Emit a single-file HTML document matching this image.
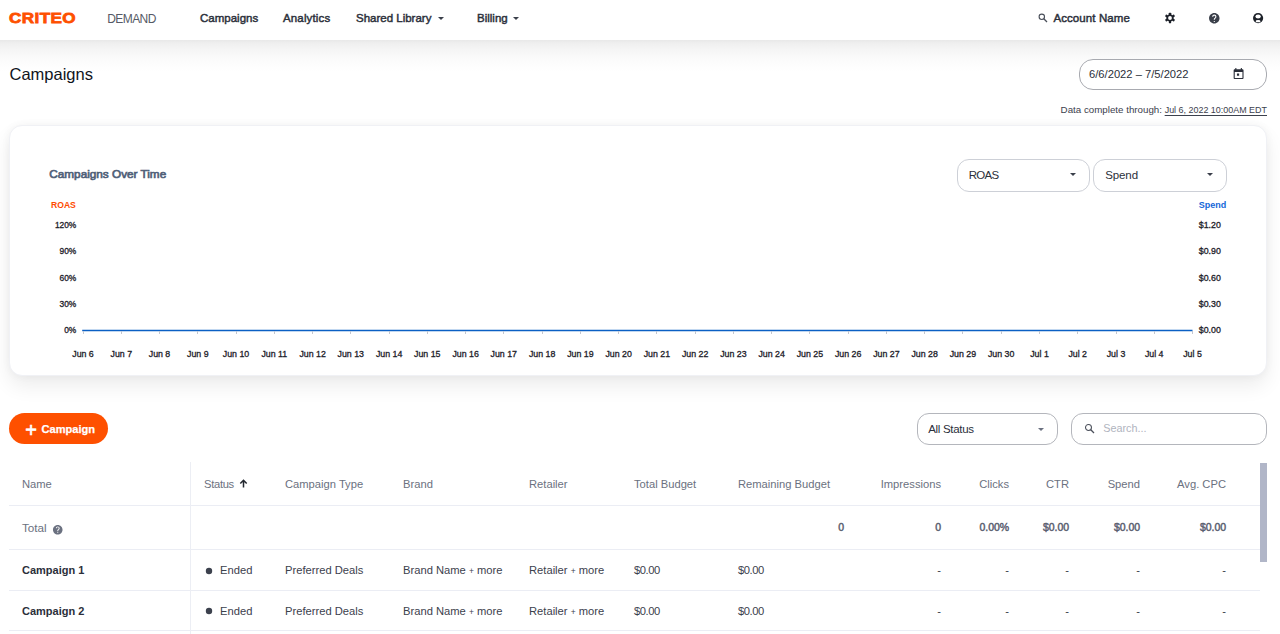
<!DOCTYPE html>
<html lang="en">
<head>
<meta charset="utf-8">
<title>Campaigns</title>
<style>
*{box-sizing:border-box;margin:0;padding:0}
html,body{width:1280px;height:634px;overflow:hidden;background:#fff;font-family:"Liberation Sans",sans-serif;color:#23272f}
.abs{position:absolute;white-space:nowrap}
#nav{position:absolute;left:0;top:0;width:1280px;height:40px;background:#fff;z-index:5}
#navshadow{position:absolute;left:0;top:40px;width:1280px;height:32px;background:linear-gradient(#e8e8e8,#efefef 10%,#f5f5f5 30%,#fafafa 55%,#fdfdfd 78%,#fff);z-index:1}
.logo{left:9.300px;top:8.200px;font-size:15.500px;font-weight:bold;color:#fe5000;letter-spacing:0.350px;line-height:20px;-webkit-text-stroke:0.8px #fe5000;transform:scaleX(1.105);transform-origin:0 50%}
.demand{left:107.300px;top:11.600px;font-size:12px;color:#555a66;line-height:14px;letter-spacing:-0.6px}
.navi{top:11px;font-size:11.5px;line-height:14px;color:#2b2f3a;-webkit-text-stroke:0.45px #2b2f3a}
.caret{position:absolute;width:0;height:0;border-left:3.9px solid transparent;border-right:3.9px solid transparent;border-top:3.7px solid #3a3f4a}
h1{font-weight:normal}
.title{left:9.5px;top:64px;font-size:16.5px;line-height:20px;color:#10141c}
.pill{position:absolute;border:1px solid #b9bcc4;border-radius:16px;background:#fff}
.card{position:absolute;left:9px;top:125px;width:1258px;height:251px;border-radius:13px;background:#fff;border:1px solid #f0f1f5;box-shadow:0 10px 20px rgba(0,0,0,0.075),0 0 8px rgba(0,0,0,0.045);z-index:2}
.ax{font-size:9px;line-height:12px;color:#1d2129;-webkit-text-stroke:0.3px #1d2129}
.ay{font-size:8.400px}
.axx{font-size:8.800px}
table{border-collapse:collapse}
.th{font-size:11.200px;color:#6b7180;line-height:14px}
.td{font-size:11.200px;color:#3c414d;line-height:14px}
.hl{position:absolute;height:1px;background:#ebedf4}
</style>
</head>
<body>
<div id="nav">
  <div class="abs logo">CRITEO</div>
  <div class="abs demand">DEMAND</div>
  <div class="abs navi" style="left:200px">Campaigns</div>
  <div class="abs navi" style="left:283px;letter-spacing:0.15px">Analytics</div>
  <div class="abs navi" style="left:356px">Shared Library</div>
  <div class="caret" style="left:438.200px;top:17px"></div>
  <div class="abs navi" style="left:477px">Billing</div>
  <div class="caret" style="left:512.800px;top:17px"></div>
  <svg class="abs" style="left:1038px;top:13px" width="10" height="10" viewBox="0 0 10 10"><circle cx="3.8" cy="3.8" r="2.7" fill="none" stroke="#4a4f5a" stroke-width="1.1"/><path d="M5.8 5.8 L9 9" stroke="#4a4f5a" stroke-width="1.3"/></svg>
  <div class="abs navi" style="left:1053.400px;letter-spacing:0.1px">Account Name</div>
  <svg class="abs" style="left:1164.200px;top:11.900px" width="12" height="12" viewBox="-12 -12 24 24"><g fill="#1d2129"><rect x="-2.300" y="-10.400" width="4.600" height="4.500" rx="0.8" transform="rotate(0)"/><rect x="-2.300" y="-10.400" width="4.600" height="4.500" rx="0.8" transform="rotate(60)"/><rect x="-2.300" y="-10.400" width="4.600" height="4.500" rx="0.8" transform="rotate(120)"/><rect x="-2.300" y="-10.400" width="4.600" height="4.500" rx="0.8" transform="rotate(180)"/><rect x="-2.300" y="-10.400" width="4.600" height="4.500" rx="0.8" transform="rotate(240)"/><rect x="-2.300" y="-10.400" width="4.600" height="4.500" rx="0.8" transform="rotate(300)"/></g><circle r="5.6" fill="none" stroke="#1d2129" stroke-width="3.6"/></svg>
  <svg class="abs" style="left:1207.500px;top:11.500px" width="12.6" height="12.6" viewBox="0 0 24 24"><path fill="#3a3f4a" d="M12 2C6.48 2 2 6.48 2 12s4.48 10 10 10 10-4.48 10-10S17.52 2 12 2zm1 17h-2v-2h2v2zm2.07-7.75l-.9.92C13.45 12.9 13 13.5 13 15h-2v-.5c0-1.1.45-2.1 1.17-2.83l1.24-1.26c.37-.36.59-.86.59-1.41 0-1.1-.9-2-2-2s-2 .9-2 2H8c0-2.21 1.79-4 4-4s4 1.790 4 4c0 .88-.36 1.68-.93 2.250z"/></svg>
  <svg class="abs" style="left:1251.600px;top:11.900px" width="12.2" height="12.2" viewBox="-12 -12 24 24"><circle r="10" fill="#1d2129"/><ellipse cx="0" cy="-3.300" rx="5.300" ry="3.900" fill="#fff"/><ellipse cx="0" cy="6.100" rx="4.800" ry="2.300" fill="#fff"/></svg>
</div>
<div id="navshadow"></div>

<h1 class="abs title" style="z-index:3">Campaigns</h1>

<div class="pill" style="left:1079px;top:59px;width:188px;height:31px;z-index:3;border-radius:14px;border-color:#a8aab0"></div>
<div class="abs" style="left:1089px;top:67px;font-size:11.2px;line-height:14px;color:#2b2f3a;z-index:3">6/6/2022 – 7/5/2022</div>
<svg class="abs" style="left:1231.900px;top:66.900px;z-index:3" width="13.2" height="13.2" viewBox="0 0 24 24"><path fill="#2b2f3a" d="M19 4h-1V2h-2v2H8V2H6v2H5c-1.100 0-2 .9-2 2v14c0 1.100.9 2 2 2h14c1.100 0 2-.9 2-2V6c0-1.100-.9-2-2-2zm0 16H5V9h14v11zM9 12h4v4H9z"/></svg>
<div class="abs" style="right:13px;top:104px;font-size:9.750px;line-height:12px;color:#3c414d;z-index:3">Data complete through: <span style="font-size:8.950px;text-decoration:underline;text-underline-offset:1.5px">Jul 6, 2022 10:00AM EDT</span></div>

<div class="card"></div>
<div id="chart" style="position:absolute;left:0;top:0;width:1280px;height:0;z-index:3">
  <div class="abs" style="left:49.300px;top:167px;font-size:11.750px;line-height:14px;color:#506078;-webkit-text-stroke:0.7px #506078">Campaigns Over Time</div>
  <div class="pill" style="left:957px;top:159px;width:133px;height:33px;border-radius:12px;border-color:#cdd0d7"></div>
  <div class="abs" style="left:968.700px;top:168px;font-size:11.500px;line-height:14px;color:#2b2f3a;letter-spacing:-0.7px">ROAS</div>
  <div class="caret" style="left:1070.200px;top:173px;border-left-width:3.1px;border-right-width:3.1px;border-top-width:3px"></div>
  <div class="pill" style="left:1093px;top:159px;width:134px;height:33px;border-radius:12px;border-color:#cdd0d7"></div>
  <div class="abs" style="left:1105.200px;top:168px;font-size:11.500px;line-height:14px;color:#2b2f3a;letter-spacing:-0.1px">Spend</div>
  <div class="caret" style="left:1207px;top:173px;border-left-width:3.1px;border-right-width:3.1px;border-top-width:3px"></div>
  <div class="abs ax" style="left:51px;top:199.300px;color:#fe4a00;font-weight:bold;font-size:8.600px;-webkit-text-stroke:0">ROAS</div>
  <div class="abs ax ay" style="right:1203.7px;top:219.2px">120%</div>
  <div class="abs ax ay" style="right:1203.7px;top:245.2px">90%</div>
  <div class="abs ax ay" style="right:1203.7px;top:272.2px">60%</div>
  <div class="abs ax ay" style="right:1203.7px;top:298.2px">30%</div>
  <div class="abs ax ay" style="right:1203.7px;top:324.2px">0%</div>
  <div class="abs ax" style="left:1198.800px;top:199.300px;color:#1467d8;font-weight:bold;font-size:9px;-webkit-text-stroke:0">Spend</div>
  <div class="abs ax ay" style="left:1198.800px;top:219.2px;font-size:8.800px">$1.20</div>
  <div class="abs ax ay" style="left:1198.800px;top:245.2px;font-size:8.800px">$0.90</div>
  <div class="abs ax ay" style="left:1198.800px;top:272.2px;font-size:8.800px">$0.60</div>
  <div class="abs ax ay" style="left:1198.800px;top:298.2px;font-size:8.800px">$0.30</div>
  <div class="abs ax ay" style="left:1198.800px;top:324.2px;font-size:8.800px">$0.00</div>
  <svg class="abs" style="left:0;top:320px" width="1280" height="20" viewBox="0 0 1280 20"><line x1="82.200" y1="10.500" x2="1192.500" y2="10.500" stroke="#0b60c4" stroke-width="1.500"/></svg>
  <div style="position:absolute;left:82.5px;top:331.300px;width:1px;height:3px;background:#c2c6d0"></div>
  <div class="abs ax axx" style="left:53.0px;width:60px;text-align:center;top:347.600px">Jun 6</div>
  <div style="position:absolute;left:120.8px;top:331.300px;width:1px;height:3px;background:#c2c6d0"></div>
  <div class="abs ax axx" style="left:91.3px;width:60px;text-align:center;top:347.600px">Jun 7</div>
  <div style="position:absolute;left:159.0px;top:331.300px;width:1px;height:3px;background:#c2c6d0"></div>
  <div class="abs ax axx" style="left:129.5px;width:60px;text-align:center;top:347.600px">Jun 8</div>
  <div style="position:absolute;left:197.3px;top:331.300px;width:1px;height:3px;background:#c2c6d0"></div>
  <div class="abs ax axx" style="left:167.8px;width:60px;text-align:center;top:347.600px">Jun 9</div>
  <div style="position:absolute;left:235.5px;top:331.300px;width:1px;height:3px;background:#c2c6d0"></div>
  <div class="abs ax axx" style="left:206.0px;width:60px;text-align:center;top:347.600px">Jun 10</div>
  <div style="position:absolute;left:273.8px;top:331.300px;width:1px;height:3px;background:#c2c6d0"></div>
  <div class="abs ax axx" style="left:244.3px;width:60px;text-align:center;top:347.600px">Jun 11</div>
  <div style="position:absolute;left:312.1px;top:331.300px;width:1px;height:3px;background:#c2c6d0"></div>
  <div class="abs ax axx" style="left:282.6px;width:60px;text-align:center;top:347.600px">Jun 12</div>
  <div style="position:absolute;left:350.3px;top:331.300px;width:1px;height:3px;background:#c2c6d0"></div>
  <div class="abs ax axx" style="left:320.8px;width:60px;text-align:center;top:347.600px">Jun 13</div>
  <div style="position:absolute;left:388.6px;top:331.300px;width:1px;height:3px;background:#c2c6d0"></div>
  <div class="abs ax axx" style="left:359.1px;width:60px;text-align:center;top:347.600px">Jun 14</div>
  <div style="position:absolute;left:426.8px;top:331.300px;width:1px;height:3px;background:#c2c6d0"></div>
  <div class="abs ax axx" style="left:397.3px;width:60px;text-align:center;top:347.600px">Jun 15</div>
  <div style="position:absolute;left:465.1px;top:331.300px;width:1px;height:3px;background:#c2c6d0"></div>
  <div class="abs ax axx" style="left:435.6px;width:60px;text-align:center;top:347.600px">Jun 16</div>
  <div style="position:absolute;left:503.3px;top:331.300px;width:1px;height:3px;background:#c2c6d0"></div>
  <div class="abs ax axx" style="left:473.8px;width:60px;text-align:center;top:347.600px">Jun 17</div>
  <div style="position:absolute;left:541.6px;top:331.300px;width:1px;height:3px;background:#c2c6d0"></div>
  <div class="abs ax axx" style="left:512.1px;width:60px;text-align:center;top:347.600px">Jun 18</div>
  <div style="position:absolute;left:579.9px;top:331.300px;width:1px;height:3px;background:#c2c6d0"></div>
  <div class="abs ax axx" style="left:550.4px;width:60px;text-align:center;top:347.600px">Jun 19</div>
  <div style="position:absolute;left:618.1px;top:331.300px;width:1px;height:3px;background:#c2c6d0"></div>
  <div class="abs ax axx" style="left:588.6px;width:60px;text-align:center;top:347.600px">Jun 20</div>
  <div style="position:absolute;left:656.4px;top:331.300px;width:1px;height:3px;background:#c2c6d0"></div>
  <div class="abs ax axx" style="left:626.9px;width:60px;text-align:center;top:347.600px">Jun 21</div>
  <div style="position:absolute;left:694.6px;top:331.300px;width:1px;height:3px;background:#c2c6d0"></div>
  <div class="abs ax axx" style="left:665.1px;width:60px;text-align:center;top:347.600px">Jun 22</div>
  <div style="position:absolute;left:732.9px;top:331.300px;width:1px;height:3px;background:#c2c6d0"></div>
  <div class="abs ax axx" style="left:703.4px;width:60px;text-align:center;top:347.600px">Jun 23</div>
  <div style="position:absolute;left:771.2px;top:331.300px;width:1px;height:3px;background:#c2c6d0"></div>
  <div class="abs ax axx" style="left:741.7px;width:60px;text-align:center;top:347.600px">Jun 24</div>
  <div style="position:absolute;left:809.4px;top:331.300px;width:1px;height:3px;background:#c2c6d0"></div>
  <div class="abs ax axx" style="left:779.9px;width:60px;text-align:center;top:347.600px">Jun 25</div>
  <div style="position:absolute;left:847.7px;top:331.300px;width:1px;height:3px;background:#c2c6d0"></div>
  <div class="abs ax axx" style="left:818.2px;width:60px;text-align:center;top:347.600px">Jun 26</div>
  <div style="position:absolute;left:885.9px;top:331.300px;width:1px;height:3px;background:#c2c6d0"></div>
  <div class="abs ax axx" style="left:856.4px;width:60px;text-align:center;top:347.600px">Jun 27</div>
  <div style="position:absolute;left:924.2px;top:331.300px;width:1px;height:3px;background:#c2c6d0"></div>
  <div class="abs ax axx" style="left:894.7px;width:60px;text-align:center;top:347.600px">Jun 28</div>
  <div style="position:absolute;left:962.4px;top:331.300px;width:1px;height:3px;background:#c2c6d0"></div>
  <div class="abs ax axx" style="left:932.9px;width:60px;text-align:center;top:347.600px">Jun 29</div>
  <div style="position:absolute;left:1000.7px;top:331.300px;width:1px;height:3px;background:#c2c6d0"></div>
  <div class="abs ax axx" style="left:971.2px;width:60px;text-align:center;top:347.600px">Jun 30</div>
  <div style="position:absolute;left:1039.0px;top:331.300px;width:1px;height:3px;background:#c2c6d0"></div>
  <div class="abs ax axx" style="left:1009.5px;width:60px;text-align:center;top:347.600px">Jul 1</div>
  <div style="position:absolute;left:1077.2px;top:331.300px;width:1px;height:3px;background:#c2c6d0"></div>
  <div class="abs ax axx" style="left:1047.7px;width:60px;text-align:center;top:347.600px">Jul 2</div>
  <div style="position:absolute;left:1115.5px;top:331.300px;width:1px;height:3px;background:#c2c6d0"></div>
  <div class="abs ax axx" style="left:1086.0px;width:60px;text-align:center;top:347.600px">Jul 3</div>
  <div style="position:absolute;left:1153.7px;top:331.300px;width:1px;height:3px;background:#c2c6d0"></div>
  <div class="abs ax axx" style="left:1124.2px;width:60px;text-align:center;top:347.600px">Jul 4</div>
  <div style="position:absolute;left:1192.0px;top:331.300px;width:1px;height:3px;background:#c2c6d0"></div>
  <div class="abs ax axx" style="left:1162.5px;width:60px;text-align:center;top:347.600px">Jul 5</div>
</div>
<div id="tools" style="position:absolute;left:0;top:0;width:1280px;height:0;z-index:3">
<div class="abs" style="left:9px;top:413px;width:99px;height:31px;border-radius:16px;background:#fe5000"></div>
<div class="abs" id="plus" style="left:25.200px;top:419.500px;font-size:20px;line-height:20px;color:#fff;-webkit-text-stroke:0.6px #fff">+</div><div class="abs" id="btntxt" style="left:41.500px;top:421.500px;font-size:11.100px;line-height:14px;font-weight:bold;color:#fff;-webkit-text-stroke:0.25px #fff">Campaign</div>
<div class="pill" style="left:917px;top:413px;width:141px;height:32px;border-radius:12px;border-color:#b4b6bc"></div>
<div class="abs" style="left:928.200px;top:422px;font-size:11.500px;line-height:14px;color:#2b2f3a;letter-spacing:-0.3px">All Status</div>
<div class="caret" style="left:1038.200px;top:427.500px;border-left-width:3.6px;border-right-width:3.6px;border-top-width:3.4px;border-top-color:#6b7180"></div>
<div class="pill" style="left:1071px;top:413px;width:196px;height:32px;border-radius:12px;border-color:#b4b6bc"></div>
<svg class="abs" style="left:1083.800px;top:422.800px" width="11.5" height="11.5" viewBox="0 0 10 10"><circle cx="3.9" cy="3.9" r="2.600" fill="none" stroke="#4a4f5a" stroke-width="0.9"/><path d="M5.900 5.900 L8.700 8.700" stroke="#4a4f5a" stroke-width="1.100"/></svg>
<div class="abs" style="left:1103.300px;top:421px;font-size:10.800px;line-height:14px;color:#b0b4be">Search...</div>
</div>
<div id="tbl" style="position:absolute;left:0;top:0;width:1280px;height:0;z-index:3">
<div class="abs th" style="left:22px;top:477px">Name</div>
<div class="abs th" style="left:204px;top:477px;letter-spacing:-0.3px">Status</div>
<div class="abs th" style="left:285px;top:477px">Campaign Type</div>
<div class="abs th" style="left:403px;top:477px">Brand</div>
<div class="abs th" style="left:529px;top:477px">Retailer</div>
<div class="abs th" style="left:634px;top:477px">Total Budget</div>
<div class="abs th" style="left:738px;top:477px">Remaining Budget</div>
<svg class="abs" style="left:239.100px;top:479.400px" width="9" height="9" viewBox="0 0 9 9"><path d="M4.500 8.600V1.600M1.300 4.600L4.500 1.300L7.700 4.600" fill="none" stroke="#23272f" stroke-width="1.500"/></svg>
<div class="abs th" style="right:339px;top:477px">Impressions</div>
<div class="abs th" style="right:271px;top:477px">Clicks</div>
<div class="abs th" style="right:211px;top:477px">CTR</div>
<div class="abs th" style="right:140px;top:477px">Spend</div>
<div class="abs th" style="right:54px;top:477px">Avg. CPC</div>
<div class="abs th" style="left:22px;top:521px;font-size:11.700px">Total</div>
<svg class="abs" style="left:52.450px;top:523.750px" width="11.5" height="11.5" viewBox="0 0 24 24"><path fill="#6b7180" d="M12 2C6.480 2 2 6.480 2 12s4.480 10 10 10 10-4.480 10-10S17.520 2 12 2zm1 17h-2v-2h2v2zm2.070-7.750l-.9.920C13.450 12.900 13 13.500 13 15h-2v-.5c0-1.100.450-2.100 1.170-2.830l1.240-1.260c.370-.360.590-.860.590-1.410 0-1.100-.9-2-2-2s-2 .9-2 2H8c0-2.210 1.790-4 4-4s4 1.790 4 4c0 .880-.360 1.680-.930 2.250z"/></svg>
<div class="abs td" style="right:436px;top:520px;font-size:10.500px;color:#5a6070;-webkit-text-stroke:0.45px #5a6070;letter-spacing:-0.05px">0</div>
<div class="abs td" style="right:339px;top:520px;font-size:10.500px;color:#5a6070;-webkit-text-stroke:0.45px #5a6070;letter-spacing:-0.05px">0</div>
<div class="abs td" style="right:271px;top:520px;font-size:10.500px;color:#5a6070;-webkit-text-stroke:0.45px #5a6070;letter-spacing:-0.05px">0.00%</div>
<div class="abs td" style="right:211px;top:520px;font-size:10.500px;color:#5a6070;-webkit-text-stroke:0.45px #5a6070;letter-spacing:-0.05px">$0.00</div>
<div class="abs td" style="right:140px;top:520px;font-size:10.500px;color:#5a6070;-webkit-text-stroke:0.45px #5a6070;letter-spacing:-0.05px">$0.00</div>
<div class="abs td" style="right:54px;top:520px;font-size:10.500px;color:#5a6070;-webkit-text-stroke:0.45px #5a6070;letter-spacing:-0.05px">$0.00</div>
<div class="abs td" style="left:22px;top:563.400px;font-weight:bold;font-size:11px;color:#2b2f3a">Campaign 1</div>
<svg class="abs" style="left:204px;top:565.6px" width="10" height="10" viewBox="0 0 10 10"><circle cx="5" cy="5" r="3.200" fill="#3c414d"/></svg>
<div class="abs td" style="left:220px;top:563.400px">Ended</div>
<div class="abs td" style="left:285px;top:563.400px">Preferred Deals</div>
<div class="abs td" style="left:403px;top:563.400px">Brand Name <span style="font-size:8.500px;vertical-align:0.5px">+</span> more</div>
<div class="abs td" style="left:529px;top:563.400px">Retailer <span style="font-size:8.500px;vertical-align:0.5px">+</span> more</div>
<div class="abs td" style="left:634px;top:563.400px;letter-spacing:-0.45px">$0.00</div>
<div class="abs td" style="left:738px;top:563.400px;letter-spacing:-0.45px">$0.00</div>
<div class="abs td" style="right:339px;top:563.400px">-</div>
<div class="abs td" style="right:271px;top:563.400px">-</div>
<div class="abs td" style="right:211px;top:563.400px">-</div>
<div class="abs td" style="right:140px;top:563.400px">-</div>
<div class="abs td" style="right:54px;top:563.400px">-</div>
<div class="abs td" style="left:22px;top:603.600px;font-weight:bold;font-size:11px;color:#2b2f3a">Campaign 2</div>
<svg class="abs" style="left:204px;top:605.9px" width="10" height="10" viewBox="0 0 10 10"><circle cx="5" cy="5" r="3.200" fill="#3c414d"/></svg>
<div class="abs td" style="left:220px;top:603.600px">Ended</div>
<div class="abs td" style="left:285px;top:603.600px">Preferred Deals</div>
<div class="abs td" style="left:403px;top:603.600px">Brand Name <span style="font-size:8.500px;vertical-align:0.5px">+</span> more</div>
<div class="abs td" style="left:529px;top:603.600px">Retailer <span style="font-size:8.500px;vertical-align:0.5px">+</span> more</div>
<div class="abs td" style="left:634px;top:603.600px;letter-spacing:-0.45px">$0.00</div>
<div class="abs td" style="left:738px;top:603.600px;letter-spacing:-0.45px">$0.00</div>
<div class="abs td" style="right:339px;top:603.600px">-</div>
<div class="abs td" style="right:271px;top:603.600px">-</div>
<div class="abs td" style="right:211px;top:603.600px">-</div>
<div class="abs td" style="right:140px;top:603.600px">-</div>
<div class="abs td" style="right:54px;top:603.600px">-</div>
<div class="hl" style="left:9px;top:505px;width:1251px"></div>
<div class="hl" style="left:9px;top:549px;width:1251px"></div>
<div class="hl" style="left:9px;top:590px;width:1251px"></div>
<div class="hl" style="left:9px;top:630px;width:1251px"></div>
<div style="position:absolute;left:190px;top:462px;width:1px;height:172px;background:#eceef4"></div>
<div style="position:absolute;left:1260px;top:463px;width:7px;height:99px;background:#b1b6c8"></div>
</div>
</body>
</html>
